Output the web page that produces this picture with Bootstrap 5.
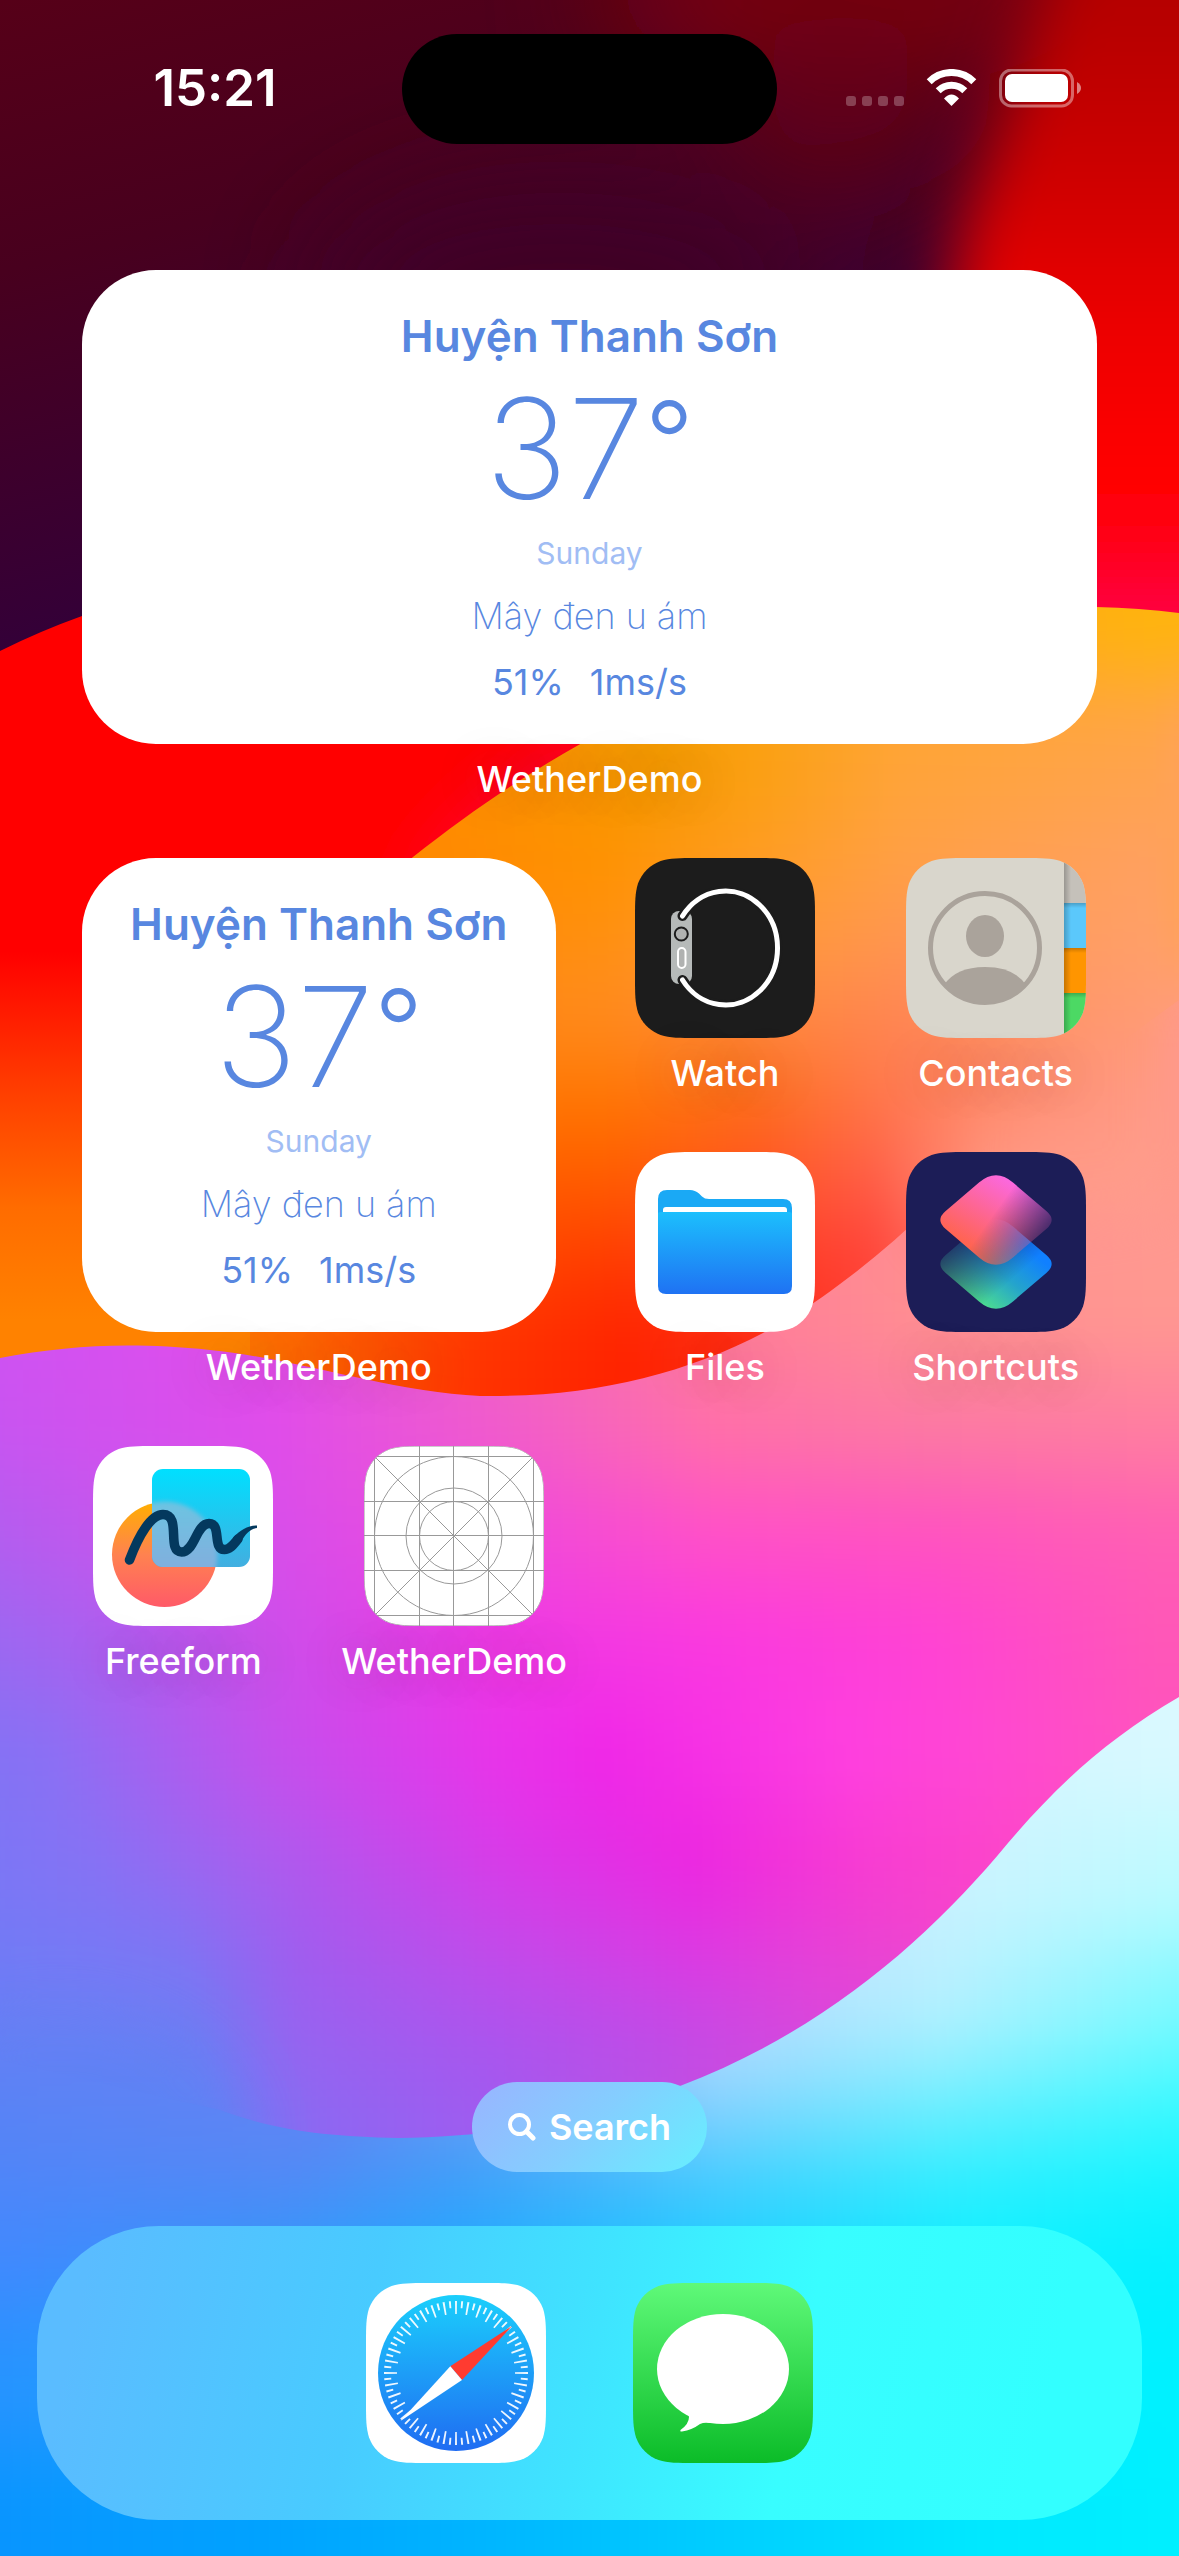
<!DOCTYPE html>
<html lang="en">
<head>
<meta charset="utf-8">
<meta name="viewport" content="width=device-width, initial-scale=1">
<title>Home Screen</title>
<link rel="stylesheet" href="https://cdn.jsdelivr.net/npm/bootstrap@5.3.0/dist/css/bootstrap.min.css">
<style>
  body { font-family: Inter, "Liberation Sans", sans-serif; background: #32003a; }
  /* wallpaper and content share one grid cell, so the wallpaper always follows the content's size */
  .phone { display: grid; min-height: 100vh; overflow: hidden; }
  .phone > * { grid-area: 1 / 1; min-width: 0; min-height: 0; }
  .wallpaper { width: 100%; height: 100%; contain: size; }
  .status { display: grid; grid-template-columns: 1fr 375px 1fr; padding: 34px 28px 126px; }
  .island { height: 110px; border-radius: 55px; background: #000; }
  .clock { font-size: 51px; font-weight: 600; line-height: 60px; margin-bottom: 2px; }
  .signals { width: 236px; height: 40px; }
  .home-grid { display: grid; grid-template-columns: repeat(4, 1fr); grid-auto-rows: 294px; padding: 0 48px; }
  .widget-wide { grid-column: span 4; grid-row: span 2; padding: 0 34px; }
  .widget-small { grid-column: span 2; grid-row: span 2; padding: 0 34px; }
  .app-icon { width: 180px; height: 180px; display: block; }
  .app-name { color: #fff; font-size: 36px; line-height: 44px; font-weight: 500; margin-top: 13px; white-space: nowrap; text-shadow: 0 0 48px rgba(90, 60, 60, .3); }
  .weather { height: 474px; border-radius: 74px; background: #fff; color: #5887e0; padding-top: 39px; white-space: nowrap; }
  .place { font-size: 44px; line-height: 54px; font-weight: 600; }
  .degrees { font-size: 139px; line-height: 172px; font-weight: 200; }
  .degree-sign { font-size: 108px; line-height: 1px; font-weight: 300; vertical-align: 20px; }
  .weekday { font-size: 30px; line-height: 37px; color: #a1bdf4; }
  .sky { font-size: 36px; line-height: 44px; font-weight: 200; margin-top: 22px; }
  .figures { font-size: 36px; line-height: 44px; margin-top: 22px; gap: 26px; }
  .search-pill { height: 90px; padding: 0 36px; gap: 13px; border: 0; border-radius: 45px; color: #fff; font-size: 36px; font-weight: 600; background: linear-gradient(135deg, #95b9ff 10%, #84ceff 50%, #68ecff 95%); }
  .search-pill svg { width: 28px; height: 28px; }
  .dock { height: 294px; margin: 54px 37px 36px; border-radius: 122px; gap: 87px; background: linear-gradient(102deg, #5abcff 5%, #48cbff 30%, #3fe4ff 50%, #38fdff 68%, #32ffff 90%); }
</style>
</head>
<body>
<div class="phone">
  <svg class="wallpaper" viewBox="0 0 1179 2556" preserveAspectRatio="none" aria-hidden="true">
    <defs>
      <filter id="soft" x="-30%" y="-30%" width="160%" height="160%"><feGaussianBlur stdDeviation="60"/></filter>
      <filter id="edge" x="-50%" y="-50%" width="200%" height="200%"><feGaussianBlur stdDeviation="32"/></filter>
      <filter id="bands" x="-20%" y="-20%" width="140%" height="140%" color-interpolation-filters="sRGB"><feGaussianBlur stdDeviation="14 42"/></filter>
      <linearGradient id="dusk" gradientUnits="userSpaceOnUse" x1="0" y1="0" x2="160" y2="640"><stop offset="0" stop-color="#560018"/><stop offset=".4" stop-color="#48001e"/><stop offset="1" stop-color="#32003a"/></linearGradient>
      <linearGradient id="flare" x1="0" y1="0" x2="0" y2="620" gradientUnits="userSpaceOnUse"><stop offset="0" stop-color="#b40000"/><stop offset=".3" stop-color="#cf0000"/><stop offset=".5" stop-color="#ea0000"/><stop offset=".75" stop-color="#ff0000"/><stop offset=".88" stop-color="#ff0010"/><stop offset="1" stop-color="#ff0048"/></linearGradient>
      <linearGradient id="ember" x1="0" y1="600" x2="0" y2="1400" gradientUnits="userSpaceOnUse"><stop offset=".44" stop-color="#ff0000"/><stop offset=".62" stop-color="#ff4000"/><stop offset=".76" stop-color="#ff6c00"/><stop offset=".9" stop-color="#ff8200"/></linearGradient>
      <clipPath id="sunClip"><path d="M250 1100C300 950 360 900 413 857C470 812 520 778 582 743C750 655 930 600 1096 607Q1140 608 1179 613V1500H250Z"/></clipPath>

      <linearGradient id="s1"><stop offset=".38" stop-color="#ff8c00"/><stop offset=".8" stop-color="#ffa818"/><stop offset=".975" stop-color="#ffb40c"/></linearGradient>
      <linearGradient id="s2"><stop offset=".38" stop-color="#ff8c00"/><stop offset=".55" stop-color="#f29a00"/><stop offset=".64" stop-color="#faa010"/><stop offset=".76" stop-color="#ffa436"/><stop offset=".975" stop-color="#ffa44a"/></linearGradient>
      <linearGradient id="s3"><stop offset=".38" stop-color="#ff8a00"/><stop offset=".51" stop-color="#ff9200"/><stop offset=".64" stop-color="#ff9c20"/><stop offset=".76" stop-color="#ffa044"/><stop offset=".975" stop-color="#ffa060"/></linearGradient>
      <linearGradient id="s4"><stop offset=".38" stop-color="#ff8a08"/><stop offset=".51" stop-color="#ff9010"/><stop offset=".64" stop-color="#ff9a38"/><stop offset=".76" stop-color="#ff9650"/><stop offset=".975" stop-color="#ffa068"/></linearGradient>
      <linearGradient id="s5"><stop offset=".38" stop-color="#ff8818"/><stop offset=".51" stop-color="#ff8a20"/><stop offset=".64" stop-color="#ff8840"/><stop offset=".76" stop-color="#ff8452"/><stop offset=".89" stop-color="#ff9468"/><stop offset=".975" stop-color="#ff9a74"/></linearGradient>
      <linearGradient id="s6"><stop offset=".38" stop-color="#ff7800"/><stop offset=".51" stop-color="#ff7600"/><stop offset=".64" stop-color="#fe6c18"/><stop offset=".76" stop-color="#ff7850"/><stop offset=".89" stop-color="#ff9078"/><stop offset=".975" stop-color="#ff9a86"/></linearGradient>
      <linearGradient id="s7"><stop offset=".38" stop-color="#ff5c00"/><stop offset=".51" stop-color="#ff5c00"/><stop offset=".64" stop-color="#ff5424"/><stop offset=".74" stop-color="#ff5e48"/><stop offset=".84" stop-color="#ff9c88"/><stop offset=".975" stop-color="#ff9e8c"/></linearGradient>
      <linearGradient id="s8"><stop offset=".25" stop-color="#ff6000"/><stop offset=".51" stop-color="#ff3c00"/><stop offset=".64" stop-color="#ff3a20"/><stop offset=".74" stop-color="#ff4038"/><stop offset=".86" stop-color="#ff9488"/><stop offset=".975" stop-color="#ff9a8c"/></linearGradient>
      <linearGradient id="s9"><stop offset=".2" stop-color="#ff7c00"/><stop offset=".3" stop-color="#ff5800"/><stop offset=".4" stop-color="#ff3400"/><stop offset=".53" stop-color="#ff2200"/><stop offset=".7" stop-color="#ff3424"/><stop offset=".9" stop-color="#ff9090"/></linearGradient>

      <linearGradient id="p1"><stop offset="0" stop-color="#cc52f4"/><stop offset=".255" stop-color="#e24eea"/><stop offset=".425" stop-color="#f060c4"/><stop offset=".595" stop-color="#ff7c98"/><stop offset=".765" stop-color="#ff9090"/><stop offset=".935" stop-color="#ff9890"/></linearGradient>
      <linearGradient id="p2"><stop offset="0" stop-color="#c456f2"/><stop offset=".255" stop-color="#e04cea"/><stop offset=".425" stop-color="#f05ccc"/><stop offset=".595" stop-color="#ff70a8"/><stop offset=".765" stop-color="#fb7aa2"/><stop offset=".935" stop-color="#ff7ea0"/></linearGradient>
      <linearGradient id="p3"><stop offset="0" stop-color="#ac60f0"/><stop offset=".255" stop-color="#d84eea"/><stop offset=".425" stop-color="#ee48dc"/><stop offset=".595" stop-color="#ff50c8"/><stop offset=".765" stop-color="#ff52c0"/><stop offset=".935" stop-color="#ff5eb4"/></linearGradient>
      <linearGradient id="p4"><stop offset="0" stop-color="#946cf2"/><stop offset=".1" stop-color="#a662f0"/><stop offset=".255" stop-color="#cc4eea"/><stop offset=".425" stop-color="#ec38e4"/><stop offset=".595" stop-color="#fa38e0"/><stop offset=".765" stop-color="#ff42d4"/><stop offset=".935" stop-color="#ff56b8"/></linearGradient>
      <linearGradient id="p5"><stop offset="0" stop-color="#7e74f4"/><stop offset=".085" stop-color="#8a70f4"/><stop offset=".255" stop-color="#c450ec"/><stop offset=".425" stop-color="#e834ea"/><stop offset=".51" stop-color="#f026e8"/><stop offset=".7" stop-color="#ff40e0"/><stop offset=".935" stop-color="#ff52c0"/></linearGradient>
      <linearGradient id="p6"><stop offset="0" stop-color="#7878f6"/><stop offset=".12" stop-color="#8672f4"/><stop offset=".255" stop-color="#ac5cee"/><stop offset=".425" stop-color="#d63ce8"/><stop offset=".58" stop-color="#ec26e0"/><stop offset=".72" stop-color="#f83cd0"/><stop offset=".9" stop-color="#ff4cc4"/></linearGradient>
      <linearGradient id="p7"><stop offset="0" stop-color="#6e7cf6"/><stop offset=".18" stop-color="#7c76f4"/><stop offset=".28" stop-color="#a05cee"/><stop offset=".425" stop-color="#c04cea"/><stop offset=".58" stop-color="#dc3ae2"/><stop offset=".72" stop-color="#ea44d2"/><stop offset=".9" stop-color="#ff4cc4"/></linearGradient>
      <linearGradient id="p8"><stop offset="0" stop-color="#6080f4"/><stop offset=".2" stop-color="#6c7cf2"/><stop offset=".27" stop-color="#9664f0"/><stop offset=".425" stop-color="#aa54ee"/><stop offset=".56" stop-color="#be4ce8"/><stop offset=".68" stop-color="#d848dc"/></linearGradient>
      <linearGradient id="p9"><stop offset="0" stop-color="#5684f6"/><stop offset=".2" stop-color="#6480f4"/><stop offset=".29" stop-color="#8c68f2"/><stop offset=".42" stop-color="#9e5cf0"/><stop offset=".6" stop-color="#c84cde"/></linearGradient>

      <linearGradient id="w1"><stop offset=".7" stop-color="#cef4ff"/><stop offset="1" stop-color="#dcfaff"/></linearGradient>
      <linearGradient id="w2"><stop offset="0" stop-color="#7078f4"/><stop offset=".6" stop-color="#bce0ff"/><stop offset=".8" stop-color="#caf4ff"/><stop offset="1" stop-color="#bcfcff"/></linearGradient>
      <linearGradient id="w3"><stop offset="0" stop-color="#6a7ef4"/><stop offset=".3" stop-color="#6a80f4"/><stop offset=".6" stop-color="#b4dcff"/><stop offset=".77" stop-color="#b8f0ff"/><stop offset="1" stop-color="#74fcff"/></linearGradient>
      <linearGradient id="w4"><stop offset="0" stop-color="#5a82f5"/><stop offset=".3" stop-color="#6084f4"/><stop offset=".425" stop-color="#70a4f6"/><stop offset=".6" stop-color="#94d4ff"/><stop offset=".765" stop-color="#7ceeff"/><stop offset="1" stop-color="#38fcff"/></linearGradient>
      <linearGradient id="w5"><stop offset="0" stop-color="#5084f8"/><stop offset=".27" stop-color="#5688f5"/><stop offset=".4" stop-color="#429cf8"/><stop offset=".6" stop-color="#4cccff"/><stop offset=".765" stop-color="#38ecff"/><stop offset="1" stop-color="#10f8ff"/></linearGradient>
      <linearGradient id="w6"><stop offset="0" stop-color="#4486ff"/><stop offset=".25" stop-color="#3694fa"/><stop offset=".4" stop-color="#24a8ff"/><stop offset=".6" stop-color="#20ceff"/><stop offset=".8" stop-color="#10f0ff"/><stop offset="1" stop-color="#00f2ff"/></linearGradient>
      <linearGradient id="w7"><stop offset="0" stop-color="#2a90ff"/><stop offset=".4" stop-color="#10b0ff"/><stop offset=".8" stop-color="#00f0ff"/><stop offset="1" stop-color="#00f2ff"/></linearGradient>
      <linearGradient id="w8"><stop offset="0" stop-color="#0a92ff"/><stop offset=".25" stop-color="#00a2ff"/><stop offset=".425" stop-color="#00b6ff"/><stop offset=".6" stop-color="#00ceff"/><stop offset=".8" stop-color="#00e8ff"/><stop offset="1" stop-color="#00f2ff"/></linearGradient>

      <mask id="pinkMask" maskUnits="userSpaceOnUse" x="0" y="900" width="1179" height="1300">
        <path fill="#fff" d="M0 1358C70 1345 130 1342 210 1350C300 1359 390 1392 480 1396C620 1398 740 1360 840 1284C900 1240 950 1190 1000 1130L1179 1000V1697C1109 1738 1060 1782 1008 1843C932 1935 827 2030 680 2086C590 2120 500 2137 398 2138C330 2136 280 2132 220 2110L0 2060Z"/>
        <ellipse cx="60" cy="2150" rx="175" ry="130" fill="#000" filter="url(#edge)"/>
        <path d="M930 1240L1179 1210V940H960Z" fill="#000" filter="url(#edge)"/>
      </mask>
    </defs>
    <rect width="1179" height="1400" fill="url(#dusk)"/>
    <g filter="url(#soft)">
      <ellipse cx="860" cy="-10" rx="260" ry="90" fill="#7c000c"/>
      <ellipse cx="560" cy="300" rx="240" ry="110" fill="#400028"/>
      <ellipse cx="840" cy="100" rx="110" ry="90" fill="#620018"/>
    </g>
    <path d="M1080 -150L1020 60L960 230L940 400L900 760H1400V-150Z" fill="url(#flare)" filter="url(#edge)"/>
    <path d="M0 651Q40 631 82 616C300 530 500 520 700 560V1450H0Z" fill="url(#ember)"/>
    <path d="M400 900Q480 790 600 720V860Z" fill="#ff0038" filter="url(#edge)"/>

    <g clip-path="url(#sunClip)"><g filter="url(#bands)">
      <rect y="450" width="1179" height="230" fill="url(#s1)"/>
      <rect y="680" width="1179" height="130" fill="url(#s2)"/>
      <rect y="810" width="1179" height="90" fill="url(#s3)"/>
      <rect y="900" width="1179" height="80" fill="url(#s4)"/>
      <rect y="980" width="1179" height="80" fill="url(#s5)"/>
      <rect y="1060" width="1179" height="80" fill="url(#s6)"/>
      <rect y="1140" width="1179" height="80" fill="url(#s7)"/>
      <rect y="1220" width="1179" height="80" fill="url(#s8)"/>
      <rect y="1300" width="1179" height="300" fill="url(#s9)"/>
      <rect x="1150" y="450" width="200" height="230" fill="#ffb40c"/>
      <rect x="1165" y="680" width="200" height="300" fill="#ffa258"/>
      <rect x="1165" y="980" width="200" height="600" fill="#ff9a84"/>
    </g></g>

    <svg y="1500" width="1179" height="1056"><g filter="url(#bands)">
      <rect x="-60" y="0" width="1299" height="310" fill="url(#w1)"/>
      <rect x="-60" y="310" width="1299" height="130" fill="url(#w2)"/>
      <rect x="-60" y="440" width="1299" height="110" fill="url(#w3)"/>
      <rect x="-60" y="550" width="1299" height="80" fill="url(#w4)"/>
      <rect x="-60" y="630" width="1299" height="80" fill="url(#w5)"/>
      <rect x="-60" y="710" width="1299" height="100" fill="url(#w6)"/>
      <rect x="-60" y="810" width="1299" height="140" fill="url(#w7)"/>
      <rect x="-60" y="950" width="1299" height="260" fill="url(#w8)"/>
    </g></svg>

    <g mask="url(#pinkMask)"><g filter="url(#bands)">
      <rect x="-60" y="950" width="1299" height="420" fill="url(#p1)"/>
      <rect x="-60" y="1370" width="1299" height="110" fill="url(#p2)"/>
      <rect x="-60" y="1480" width="1299" height="110" fill="url(#p3)"/>
      <rect x="-60" y="1590" width="1299" height="110" fill="url(#p4)"/>
      <rect x="-60" y="1700" width="1299" height="110" fill="url(#p5)"/>
      <rect x="-60" y="1810" width="1299" height="100" fill="url(#p6)"/>
      <rect x="-60" y="1910" width="1299" height="90" fill="url(#p7)"/>
      <rect x="-60" y="2000" width="1299" height="80" fill="url(#p8)"/>
      <rect x="-60" y="2080" width="1299" height="260" fill="url(#p9)"/>
    </g></g>
  </svg>

  <div class="d-flex flex-column">
    <header class="status text-white">
      <div class="d-flex align-items-center justify-content-center"><time class="clock">15:21</time></div>
      <div class="island"></div>
      <div class="d-flex align-items-center justify-content-center">
        <svg class="signals" viewBox="0 0 236 40" role="img" aria-label="No signal, Wi-Fi on, battery full">
          <g fill="#fff" fill-opacity=".25"><rect x="0" y="27" width="10" height="10" rx="3"/><rect x="16" y="27" width="10" height="10" rx="3"/><rect x="32" y="27" width="10" height="10" rx="3"/><rect x="48" y="27" width="10" height="10" rx="3"/></g>
          <g fill="none" stroke="#fff" stroke-width="7"><path d="M83.2 12.700A31.500 31.500 0 0 1 127.800 12.700"/><path d="M92.200 21.700A18.800 18.800 0 0 1 118.800 21.700"/></g>
          <path d="M98 29.500Q105.500 21.500 113 29.500L105.500 37Z" fill="#fff"/>
          <rect x="154.500" y="1" width="72" height="36" rx="11" fill="none" stroke="#fff" stroke-opacity=".4" stroke-width="3"/>
          <rect x="159" y="5" width="63" height="28" rx="7" fill="#fff"/>
          <path d="M231 13Q235 15.500 235 19T231 25Z" fill="#fff" fill-opacity=".5"/>
        </svg>
      </div>
    </header>

    <main class="home-grid flex-grow-1 align-content-start">
      <a href="#" class="widget-wide text-decoration-none text-center">
        <div class="weather d-flex flex-column align-items-center">
          <div class="place">Huyện Thanh Sơn</div>
          <div class="degrees">37<span class="degree-sign">°</span></div>
          <div class="weekday">Sunday</div>
          <div class="sky">Mây đen u ám</div>
          <div class="figures d-flex"><span>51%</span><span>1ms/s</span></div>
        </div>
        <div class="app-name">WetherDemo</div>
      </a>
      <a href="#" class="widget-small text-decoration-none text-center">
        <div class="weather d-flex flex-column align-items-center">
          <div class="place">Huyện Thanh Sơn</div>
          <div class="degrees">37<span class="degree-sign">°</span></div>
          <div class="weekday">Sunday</div>
          <div class="sky">Mây đen u ám</div>
          <div class="figures d-flex"><span>51%</span><span>1ms/s</span></div>
        </div>
        <div class="app-name">WetherDemo</div>
      </a>

      <a href="#" class="d-flex flex-column align-items-center text-decoration-none">
        <svg class="app-icon" viewBox="0 0 180 180" aria-hidden="true">
          <defs>
            <path id="tile" d="M61.9 0H118.1C135.9 0 144.8 0 154.4 3C164.9 6.850 173.150 15.100 177 25.600C180 35.200 180 44.100 180 61.900V118.100C180 135.900 180 144.800 177 154.400C173.150 164.900 164.900 173.150 154.400 177C144.800 180 135.900 180 118.100 180H61.900C44.100 180 35.200 180 25.600 177C15.100 173.150 6.850 164.900 3 154.400C0 144.800 0 135.900 0 118.100V61.900C0 44.100 0 35.200 3 25.600C6.850 15.100 15.100 6.850 25.600 3C35.200 0 44.100 0 61.900 0Z"/>
            <clipPath id="tileClip"><use href="#tile"/></clipPath>
          </defs>
          <use href="#tile" fill="#1c1c1c"/>
          <rect x="36" y="53" width="21" height="73" rx="8" fill="#b6bab9"/>
          <path d="M47.500 58A52 57 0 1 1 47.500 122" fill="none" stroke="#1c1c1c" stroke-width="10" stroke-linecap="round"/>
          <path d="M47.500 58A52 57 0 1 1 47.500 122" fill="none" stroke="#fff" stroke-width="5" stroke-linecap="round"/>
          <circle cx="46.300" cy="76" r="6.500" fill="#b0b2b1" stroke="#1c1c1c" stroke-width="2"/>
          <rect x="43" y="90" width="7.500" height="20" rx="3.700" fill="#b0b2b1" stroke="#fff" stroke-width="2"/>
        </svg>
        <span class="app-name">Watch</span>
      </a>
      <a href="#" class="d-flex flex-column align-items-center text-decoration-none">
        <svg class="app-icon" viewBox="0 0 180 180" aria-hidden="true">
          <defs>
            <clipPath id="avatar"><circle cx="79" cy="90" r="55"/></clipPath>
            <linearGradient id="tabShade" x1="0" y1="0" x2="0" y2="1"><stop offset="0" stop-opacity=".2"/><stop offset="1" stop-opacity="0"/></linearGradient>
            <linearGradient id="sideShade"><stop offset="0" stop-opacity=".22"/><stop offset="1" stop-opacity="0"/></linearGradient>
          </defs>
          <g clip-path="url(#tileClip)">
            <rect width="180" height="180" fill="#d9d6cc"/>
            <rect x="158" width="22" height="45" fill="#c5c1ba"/><rect x="158" y="45" width="22" height="45" fill="#5bc8fb"/>
            <rect x="158" y="90" width="22" height="45" fill="#ff9500"/><rect x="158" y="135" width="22" height="45" fill="#4cd964"/>
            <rect x="158" y="45" width="22" height="5" fill="url(#tabShade)"/><rect x="158" y="90" width="22" height="5" fill="url(#tabShade)"/>
            <rect x="158" y="135" width="22" height="5" fill="url(#tabShade)"/>
            <rect x="158" width="7" height="180" fill="url(#sideShade)"/>
          </g>
          <circle cx="79" cy="90" r="54.500" fill="none" stroke="#aaa39b" stroke-width="5"/>
          <ellipse cx="79" cy="78" rx="19" ry="21" fill="#aaa39b"/>
          <path clip-path="url(#avatar)" d="M38 127Q50 109 79 109T120 127V150H38Z" fill="#aaa39b"/>
        </svg>
        <span class="app-name">Contacts</span>
      </a>
      <a href="#" class="d-flex flex-column align-items-center text-decoration-none">
        <svg class="app-icon" viewBox="0 0 180 180" aria-hidden="true">
          <defs><linearGradient id="folder" x1="0" y1="0" x2="0" y2="1"><stop offset="0" stop-color="#1cbffd"/><stop offset="1" stop-color="#1f72f3"/></linearGradient></defs>
          <use href="#tile" fill="#fff"/>
          <path d="M23 70V47Q23 38 32 38H55Q60 38 64 41.500L67 44.500Q69.500 47 74 47H148Q157 47 157 56V70Z" fill="#1aa9f5"/>
          <path d="M28 66V58Q28 55 31 55H149Q152 55 152 58V66Z" fill="#fff"/>
          <path d="M23 62Q23 60 26 60H154Q157 60 157 62V134Q157 142 149 142H31Q23 142 23 134Z" fill="url(#folder)"/>
        </svg>
        <span class="app-name">Files</span>
      </a>
      <a href="#" class="d-flex flex-column align-items-center text-decoration-none">
        <svg class="app-icon" viewBox="0 0 180 180" aria-hidden="true">
          <defs>
            <path id="gem" d="M-17-37.400Q0-52 17-37.400L50.600-8.700Q60.700 0 50.600 8.700L17 37.400Q0 52-17 37.400L-50.600 8.700Q-60.700 0-50.600-8.700Z"/>
            <linearGradient id="gemTop" gradientUnits="userSpaceOnUse" x1="8" y1="-44" x2="-34" y2="22"><stop offset="0" stop-color="#fb68e0"/><stop offset="1" stop-color="#ff6450"/></linearGradient>
            <linearGradient id="fadeTop" gradientUnits="userSpaceOnUse" x1="2" y1="-12" x2="44" y2="18"><stop offset="0" stop-color="#fff"/><stop offset="1" stop-color="#fff" stop-opacity=".22"/></linearGradient>
            <linearGradient id="gemLow" gradientUnits="userSpaceOnUse" x1="36" y1="-12" x2="-10" y2="44"><stop offset="0" stop-color="#1080ff"/><stop offset=".5" stop-color="#24a4cc"/><stop offset="1" stop-color="#4cdc90"/></linearGradient>
            <linearGradient id="fadeLow" gradientUnits="userSpaceOnUse" x1="-38" y1="-22" x2="4" y2="26"><stop offset="0" stop-color="#fff" stop-opacity=".2"/><stop offset="1" stop-color="#fff"/></linearGradient>
            <mask id="maskTop" maskUnits="userSpaceOnUse" x="-70" y="-60" width="140" height="120"><rect x="-70" y="-60" width="140" height="120" fill="url(#fadeTop)"/></mask>
            <mask id="maskLow" maskUnits="userSpaceOnUse" x="-70" y="-60" width="140" height="120"><rect x="-70" y="-60" width="140" height="120" fill="url(#fadeLow)"/></mask>
          </defs>
          <use href="#tile" fill="#1c1d57"/>
          <g transform="translate(90 112)"><use href="#gem" fill="url(#gemLow)" mask="url(#maskLow)"/></g>
          <g transform="translate(90 68)"><use href="#gem" fill="url(#gemTop)" mask="url(#maskTop)"/></g>
        </svg>
        <span class="app-name">Shortcuts</span>
      </a>
      <a href="#" class="d-flex flex-column align-items-center text-decoration-none">
        <svg class="app-icon" viewBox="0 0 180 180" aria-hidden="true">
          <defs>
            <linearGradient id="aqua" x1="0" y1="0" x2="0" y2="1"><stop offset="0" stop-color="#00dfff"/><stop offset="1" stop-color="#42aee0"/></linearGradient>
            <linearGradient id="peach" x1="0" y1="0" x2="0" y2="1"><stop offset="0" stop-color="#ffaf00"/><stop offset=".5" stop-color="#ff8250"/><stop offset="1" stop-color="#ff5a68"/></linearGradient>
            <linearGradient id="frost" x1="0" y1="0" x2="0" y2="1"><stop offset="0" stop-color="#6cc4e2"/><stop offset=".6" stop-color="#80b0de"/><stop offset="1" stop-color="#80b0de"/></linearGradient>
            <clipPath id="pane"><rect x="59" y="23" width="98" height="98" rx="11"/></clipPath>
            <filter id="haze"><feGaussianBlur stdDeviation="2"/></filter>
          </defs>
          <use href="#tile" fill="#fff"/>
          <circle cx="71.500" cy="108.500" r="52.500" fill="url(#peach)"/>
          <g clip-path="url(#pane)"><rect x="59" y="23" width="98" height="98" fill="url(#aqua)"/><circle cx="71.500" cy="108.500" r="53" fill="url(#frost)" filter="url(#haze)"/></g>
          <path d="M36.500 114C46 89 58 68.500 70 68.500C89 68.500 73 106 88.500 106C102 106 103 77.500 116 77.500C129 77.500 119 103.500 131.500 103.500C137 103.500 140 99 145 93" fill="none" stroke="#04395e" stroke-width="9.500" stroke-linecap="round"/>
          <path d="M140 92C147 84 155 79.500 164 79.500V82C157 83 153 87 148 96Z" fill="#04395e"/>
        </svg>
        <span class="app-name">Freeform</span>
      </a>
      <a href="#" class="d-flex flex-column align-items-center text-decoration-none">
        <svg class="app-icon" viewBox="0 0 180 180" aria-hidden="true">
          <use href="#tile" fill="#fff"/>
          <g clip-path="url(#tileClip)" fill="none" stroke="#999" stroke-width="1">
            <path d="M10.500 0V180M55.500 0V180M89.500 0V180M124.500 0V180M169.500 0V180M0 10.500H180M0 55.500H180M0 89.500H180M0 124.500H180M0 169.500H180M0 0L180 180M180 0L0 180"/>
            <circle cx="90" cy="90" r="34.500"/><circle cx="90" cy="90" r="48"/><circle cx="90" cy="90" r="79.500"/>
            <use href="#tile"/>
          </g>
        </svg>
        <span class="app-name">WetherDemo</span>
      </a>
    </main>

    <div class="d-flex justify-content-center">
      <button type="button" class="search-pill d-flex align-items-center">
        <svg viewBox="0 0 28 28" fill="none" stroke="#fff" stroke-linecap="round" aria-hidden="true"><circle cx="11.500" cy="11.500" r="9.500" stroke-width="4"/><path d="M18.500 18.500L25 25" stroke-width="5"/></svg>
        <span>Search</span>
      </button>
    </div>

    <nav class="dock d-flex align-items-center justify-content-center" aria-label="Dock">
      <a href="#" aria-label="Safari">
        <svg class="app-icon" viewBox="0 0 180 180" aria-hidden="true">
          <defs><linearGradient id="ocean" x1="0" y1="0" x2="0" y2="1"><stop offset="0" stop-color="#1bcffc"/><stop offset="1" stop-color="#1f6cf2"/></linearGradient></defs>
          <use href="#tile" fill="#fff"/>
          <circle cx="90" cy="90" r="78" fill="url(#ocean)"/>
          <g fill="none" stroke="#fff" stroke-opacity=".92">
            <circle cx="90" cy="90" r="65.500" stroke-width="13" pathLength="36" stroke-dasharray=".16 .84" stroke-dashoffset=".08"/>
            <circle cx="90" cy="90" r="68.500" stroke-width="7" pathLength="36" stroke-dasharray=".16 .84" stroke-dashoffset=".58"/>
          </g>
          <path d="M146 43L84.300 83.300L96 97Z" fill="#ff3b30"/><path d="M34.500 138L84.300 83.300L96 97Z" fill="#fff"/>
        </svg>
      </a>
      <a href="#" aria-label="Messages">
        <svg class="app-icon" viewBox="0 0 180 180" aria-hidden="true">
          <defs><linearGradient id="leaf" x1="0" y1="0" x2="0" y2="1"><stop offset="0" stop-color="#5ff979"/><stop offset="1" stop-color="#0bbc28"/></linearGradient></defs>
          <use href="#tile" fill="url(#leaf)"/>
          <ellipse cx="90" cy="86" rx="66" ry="55" fill="#fff"/>
          <path d="M50 128Q56 131 56 134Q56 141 47.500 147Q46.500 149 49 148.500Q59 147 67 141Q71 139 77 140L80 120Z" fill="#fff"/>
        </svg>
      </a>
    </nav>
  </div>
</div>
<script src="https://cdn.jsdelivr.net/npm/bootstrap@5.3.0/dist/js/bootstrap.bundle.min.js"></script>
</body>
</html>
